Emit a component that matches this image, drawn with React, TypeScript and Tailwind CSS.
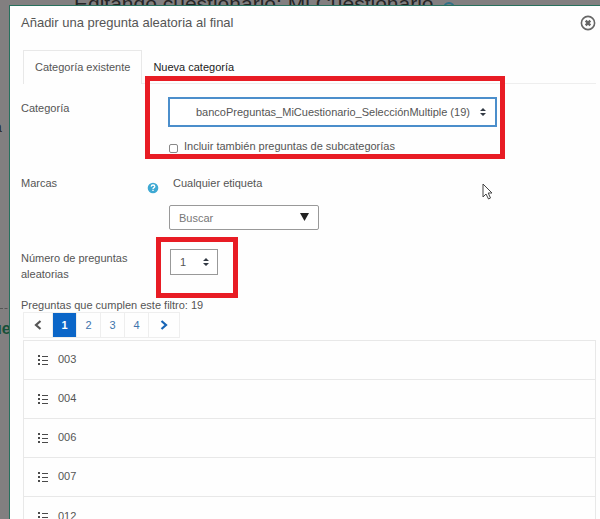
import React, { useState } from 'react';

const questions = ['003', '004', '006', '007', '012'];
const pages = [1, 2, 3, 4];

const SortIcon: React.FC<{ className?: string }> = ({ className }) => (
    <svg viewBox="0 0 6 8" className={`pointer-events-none absolute h-2 w-1.5 ${className}`} fill="#333a44">
        <path d="M3 0 6 3H0zM3 8 0 5h6z" />
    </svg>
);

const ListIcon: React.FC = () => (
    <svg viewBox="0 0 12 12" className="mt-1 size-3 shrink-0" fill="#4a4a4a">
        <path d="M0 0h2v2H0zM0 4h2v2H0zM0 8h2v2H0z" />
        <path d="M4 1h6v1H4zM4 5h6v1H4zM4 9h6v1H4z" />
    </svg>
);

const CloseIcon: React.FC = () => (
    <svg viewBox="0 0 16 16" className="size-4" fill="none" stroke="#666">
        <circle cx="8" cy="8" r="6.6" strokeWidth="1.6" />
        <path d="m5.700 5.700 4.600 4.600m0-4.600-4.600 4.600" strokeWidth="2.4" />
    </svg>
);

const HelpIcon: React.FC = () => (
    <svg viewBox="0 0 12 12" className="size-3">
        <circle cx="6" cy="6" r="5.3" fill="#3fa9d3" />
        <path d="M4.200 4.600c.1-2.200 3.600-2 3.600-.1C7.800 5.700 6 5.600 6 7" fill="none" stroke="#fff" strokeWidth="1.3" />
        <path d="M5.300 7.800h1.400v1.300H5.300z" fill="#fff" />
    </svg>
);

const Chevron: React.FC<{ next?: boolean }> = ({ next }) => (
    <svg viewBox="0 0 8 10" className="h-2.5 w-2" fill="none" stroke="currentColor" strokeWidth="2.2">
        <path d={next ? 'm1.500 1 4.500 4-4.500 4' : 'M6.500 1 2 5l4.500 4'} />
    </svg>
);

const App: React.FC = () => {
    const [page, setPage] = useState(1);
    const [subcategories, setSubcategories] = useState(false);

    return (
        <div className="relative h-screen overflow-hidden bg-[#827f80] pt-[5px] pl-[9px] font-['Liberation_Sans',Arial,sans-serif] text-[11px] leading-4 text-[#555]">
            {/* Page behind the dialog */}
            <div aria-hidden="true" className="absolute inset-0">
                <h1 className="absolute -top-2 left-[74px] text-[21px] leading-6 whitespace-nowrap text-[#262626]">Editando cuestionario: Mi Cuestionario</h1>
                <span className="absolute top-0.5 left-[443px] size-3 rounded-full border-2 border-[#2f7187]" />
                <span className="absolute top-[117px] -left-1.5 text-sm text-[#262626]">a</span>
                <span className="absolute top-[308px] w-3 border-t border-dashed border-[#555]" />
                <span className="absolute top-[317px] -left-2 text-base font-bold text-[#165038]">ue</span>
            </div>

            <div role="dialog" aria-labelledby="dialog-title" className="relative min-h-full border-t border-l border-[#28705d] bg-[#fefefe] pr-1 pl-[11px]">
                <header className="flex h-11 items-start justify-between pt-[7px]">
                    <h2 id="dialog-title" className="text-[13px] leading-5">Añadir una pregunta aleatoria al final</h2>
                    <button type="button" aria-label="Cerrar" className="mt-0.5"><CloseIcon /></button>
                </header>

                <div role="tablist" className="ml-0.5 flex h-[34px] border-b border-[#eee]">
                    <button role="tab" aria-selected="true" className="-mb-px border border-b-0 border-[#e8e8e8] bg-[#fefefe] px-[11px] pb-0.5">Categoría existente</button>
                    <button role="tab" aria-selected="false" className="px-[11px] text-[#222]">Nueva categoría</button>
                </div>

                <form onSubmit={(e) => e.preventDefault()}>
                    {/* Category */}
                    <div className="relative flex h-[91px] pt-[13px]">
                        <label htmlFor="category" className="w-[147px] shrink-0 pt-[3px]">Categoría</label>
                        <div>
                            <div className="relative w-[329px]">
                                <select id="category" className="block h-[30px] w-full appearance-none border-2 border-[#4b8ecb] bg-white pl-[26px]">
                                    <option>bancoPreguntas_MiCuestionario_SelecciónMultiple (19)</option>
                                </select>
                                <SortIcon className="top-[11px] right-[11px]" />
                            </div>
                            <label className="mt-[11px] flex items-center gap-1.5 pl-px">
                                <input type="checkbox" checked={subcategories} onChange={(e) => setSubcategories(e.target.checked)} className="mt-1 size-[9px] appearance-none rounded-xs border border-[#888] bg-white checked:bg-[#0f6fc5]" />
                                Incluir también preguntas de subcategorías
                            </label>
                        </div>
                        <span className="pointer-events-none absolute -top-2 left-[124px] h-[83px] w-[360px] border-5 border-[#e81c24]" />
                    </div>

                    {/* Tags */}
                    <div className="flex h-[70px]">
                        <label htmlFor="tags" className="w-[126px] shrink-0">Marcas</label>
                        <button type="button" aria-label="Ayuda con Marcas" className="mt-[7px] mr-3 h-3"><HelpIcon /></button>
                        <div className="-ml-1">
                            <p className="pl-1.5">Cualquier etiqueta</p>
                            <div className="relative mt-[14px] ml-[2px] w-[150px]">
                                <input id="tags" placeholder="Buscar" className="block h-[25px] w-full rounded-xs border border-[#999] bg-white pl-[9px] placeholder:text-[#777]" />
                                <svg viewBox="0 0 9 8" className="pointer-events-none absolute top-2 right-2.5 h-2 w-[9px]" fill="#222"><path d="M0 0h9L4.500 8z" /></svg>
                            </div>
                        </div>
                    </div>

                    {/* Number of questions */}
                    <div className="relative flex h-[52px] pt-[5px]">
                        <label htmlFor="count" className="w-[149px] shrink-0 pr-8">Número de preguntas aleatorias</label>
                        <div className="relative -mt-px h-[26px] w-12">
                            <select id="count" className="block h-[26px] w-full appearance-none border border-[#999] bg-white pl-[9px]">
                                <option>1</option>
                                <option>2</option>
                                <option>3</option>
                            </select>
                            <SortIcon className="top-[9px] right-[9px]" />
                        </div>
                        <span className="pointer-events-none absolute -top-2 left-[135px] h-[61px] w-[82px] border-5 border-[#e81c24]" />
                    </div>
                </form>

                <p className="h-[15px]">Preguntas que cumplen este filtro: 19</p>
                <nav aria-label="Página" className="ml-0.5 flex h-[26px] w-fit divide-x divide-[#eee] border border-[#eee] text-[#3f74ac]">
                    <button type="button" aria-label="Anterior" className="flex w-[29px] items-center justify-center text-[#555]"><Chevron /></button>
                    {pages.map((n) => (
                        <button
                            key={n}
                            type="button"
                            onClick={() => setPage(n)}
                            className={n === page ? 'w-6 bg-[#0b66c8] font-bold text-white' : 'w-6'}
                        >
                            {n}
                        </button>
                    ))}
                    <button type="button" aria-label="Siguiente" className="flex w-[30px] items-center justify-center text-[#1764b5]"><Chevron next /></button>
                </nav>

                <ul className="mt-0.5 ml-0.5 divide-y divide-[#e8e8e8] border border-[#e8e8e8]">
                    {questions.map((q) => (
                        <li key={q} className="flex h-[39px] items-center gap-2 pb-0.5 pl-3.5">
                            <ListIcon />
                            {q}
                        </li>
                    ))}
                </ul>

                {/* Mouse pointer */}
                <svg viewBox="0 0 11 17" className="pointer-events-none absolute top-[177px] left-[472px] h-[17px] w-[11px]" fill="#fff" stroke="#444">
                    <path d="M1 1v13l3-3 2.500 5 2-1-2.300-5H10z" />
                </svg>
            </div>
        </div>
    );
};

export default App;
